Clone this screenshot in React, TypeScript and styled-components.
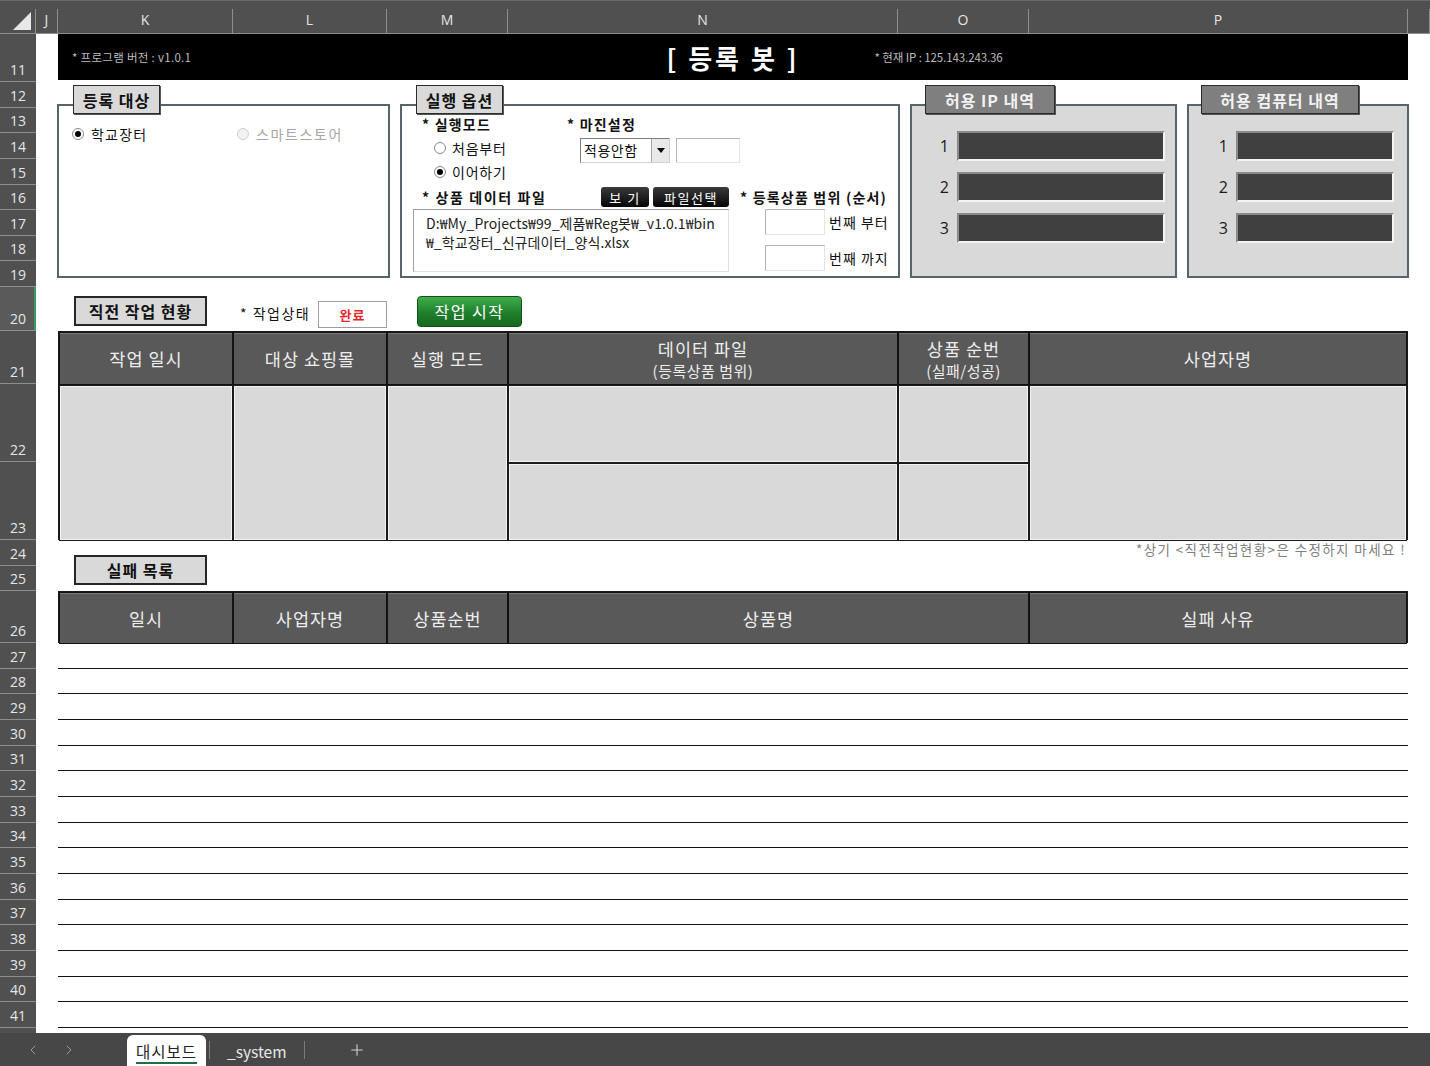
import React from 'react';
import styled, { createGlobalStyle, css } from 'styled-components';
import { ChevronLeft, ChevronRight, Plus } from 'lucide-react';

const GlobalStyle = createGlobalStyle`
  html, body {
    margin: 0;
    padding: 0;
    background: #fff;
  }
  body {
    font-family: "Noto Sans CJK KR", "Noto Sans", sans-serif;
  }
  * {
    box-sizing: border-box;
  }
`;

// sheet columns J..Q
const COLS = [
  { label: 'J', w: 22 },
  { label: 'K', w: 175 },
  { label: 'L', w: 154 },
  { label: 'M', w: 121 },
  { label: 'N', w: 390 },
  { label: 'O', w: 131 },
  { label: 'P', w: 379 },
  { label: '', w: 22 },
];

const ROWS: { n: number; h: number }[] = [
  { n: 11, h: 48 },
  ...[12, 13, 14, 15, 16, 17, 18, 19].map((n) => ({ n, h: 25.625 })),
  { n: 20, h: 44 },
  { n: 21, h: 53 },
  { n: 22, h: 78 },
  { n: 23, h: 78 },
  { n: 24, h: 26 },
  { n: 25, h: 25 },
  { n: 26, h: 52 },
  ...Array.from({ length: 15 }, (_, i) => ({ n: 27 + i, h: 385 / 15 })),
  { n: 42, h: 26 },
];

const ACTIVE_ROW = 20;
const LAST_VISIBLE_ROW = 41;

const KR = `"Noto Sans CJK KR", "Noto Sans", sans-serif`;
const UI = `"Open Sans", "Noto Sans", sans-serif`;

/* ---------- frame of the workbook ---------- */

const Window = styled.div`
  width: 1430px;
  height: 1066px;
  display: flex;
  flex-direction: column;
  overflow: hidden;
  background: #fff;
  font-family: ${KR};
`;

const ColumnHeaderBar = styled.div`
  flex: none;
  height: 34px;
  display: flex;
  padding-top: 8px;
  background: #505050;
  border-top: 1px solid #6a6a6a;
  border-bottom: 1px solid #8e8e8e;
`;

const Corner = styled.div`
  flex: none;
  width: 36px;
  border-right: 1px solid #8e8e8e;
  display: flex;
  align-items: flex-end;
  justify-content: flex-end;
  padding: 0 3px 2px 0;
`;

const ColHead = styled.div<{ $w?: number }>`
  ${({ $w }) => ($w ? `width: ${$w}px; flex: none;` : 'flex: 1;')}
  border-right: 1px solid #8e8e8e;
  padding-bottom: 3px;
  color: #e6e6e6;
  font-family: ${UI};
  font-size: 14px;
  display: flex;
  align-items: center;
  justify-content: center;
`;

const SheetBody = styled.div`
  flex: 1;
  min-height: 0;
  display: flex;
  overflow: hidden;
`;

const RowHeaderColumn = styled.div`
  flex: none;
  width: 36px;
  display: flex;
  flex-direction: column;
  background: #505050;
`;

const RowHead = styled.div<{ $h: number; $active?: boolean }>`
  flex: none;
  height: ${({ $h }) => $h}px;
  border-bottom: 1px solid #8e8e8e;
  display: flex;
  align-items: flex-end;
  justify-content: center;
  padding-bottom: 2px;
  color: #e6e6e6;
  font-family: ${UI};
  font-size: 14px;
  ${({ $active }) =>
    $active &&
    css`
      background: #5a5a5a;
      box-shadow: inset -2px 0 0 #2f9e5e;
    `}
`;

const Cells = styled.div`
  flex: none;
  display: grid;
  grid-template-columns: ${COLS.map((c) => `${c.w}px`).join(' ')};
  grid-template-rows: ${ROWS.map((r) => `${r.h}px`).join(' ')};
  background: #fff;
`;

/* ---------- banner ---------- */

const Banner = styled.div`
  grid-column: 2 / 8;
  grid-row: 1;
  margin-bottom: 2px;
  background: #000;
  display: grid;
  grid-template-columns: 1fr auto 1fr;
  align-items: center;
`;

const BannerNote = styled.span<{ $pad: number; $spacing?: number }>`
  padding-left: ${({ $pad }) => $pad}px;
  color: #bdbdbd;
  font-size: 11.5px;
  letter-spacing: ${({ $spacing = 0.3 }) => $spacing}px;
  white-space: nowrap;
`;

const BannerTitle = styled.span`
  color: #fff;
  font-size: 26px;
  font-weight: 700;
  letter-spacing: 3px;
  white-space: pre;
`;

/* ---------- group boxes ---------- */

const GroupRow = styled.div`
  grid-column: 2 / 8;
  grid-row: 2 / 10;
  margin: 0 -1px;
  padding-top: 3px;
  display: flex;
  align-items: flex-start;
  gap: 10px;
`;

const Group = styled.div<{ $w: number }>`
  flex: none;
  width: ${({ $w }) => $w}px;
  display: flex;
  flex-direction: column;
`;

const Legend = styled.div<{ $w: number; $left: number; $dark?: boolean }>`
  align-self: flex-start;
  z-index: 1;
  width: ${({ $w }) => $w}px;
  height: 29px;
  margin-left: ${({ $left }) => $left}px;
  display: flex;
  align-items: center;
  justify-content: center;
  font-size: 16px;
  font-weight: 700;
  letter-spacing: 1px;
  border: 1px solid #2b2b2b;
  box-shadow: 1px 1px 0 #555;
  background: ${({ $dark }) => ($dark ? '#7f7f7f' : '#d9d9d9')};
  color: ${({ $dark }) => ($dark ? '#f2f2f2' : '#111')};
`;

const Frame = styled.div<{ $gray?: boolean }>`
  height: 174px;
  margin-top: -10px;
  border: 2px solid #56656c;
  background: ${({ $gray }) => ($gray ? '#d9d9d9' : '#fff')};
`;

const TargetOptions = styled.div`
  display: grid;
  grid-template-columns: 165px auto;
  padding: 18px 0 0 13px;
`;

const Option = styled.div<{ $disabled?: boolean }>`
  height: 20px;
  display: flex;
  align-items: center;
  gap: 7px;
  font-size: 14px;
  letter-spacing: ${({ $disabled }) => ($disabled ? '1.6px' : '1.2px')};
  color: ${({ $disabled }) => ($disabled ? '#a6a6a6' : '#111')};
`;

const Radio = styled.span<{ $checked?: boolean; $disabled?: boolean }>`
  flex: none;
  width: 12px;
  height: 12px;
  border-radius: 50%;
  border: 1px solid ${({ $disabled }) => ($disabled ? '#cfcfcf' : '#8a8a8a')};
  background: ${({ $disabled }) => ($disabled ? '#f2f2f2' : '#fff')};
  display: flex;
  align-items: center;
  justify-content: center;
  &::after {
    content: '';
    width: 6px;
    height: 6px;
    border-radius: 50%;
    background: ${({ $checked }) => ($checked ? '#000' : 'transparent')};
  }
`;

/* ---------- run options ---------- */

const OptionsBody = styled.div`
  padding-left: 11px;
`;

const TopSection = styled.div`
  display: flex;
`;

const ModeBlock = styled.div`
  width: 154px;
  padding: 10px 0 0 9px;
`;

const MarginBlock = styled.div`
  padding-top: 10px;
`;

const FieldTitle = styled.div<{ $spacing?: number }>`
  height: 16px;
  line-height: 16px;
  font-size: 14px;
  font-weight: 700;
  letter-spacing: ${({ $spacing = 1.2 }) => $spacing}px;
  color: #111;
  white-space: nowrap;
`;

const RadioList = styled.div`
  margin-top: 4px;
  padding-left: 12px;
`;

const RadioRow = styled.div`
  height: 24px;
  display: flex;
  align-items: center;
  gap: 6px;
  font-size: 14px;
  letter-spacing: 0.8px;
  color: #111;
`;

const SelectRow = styled.div`
  margin-top: 6px;
  padding-left: 13px;
  display: flex;
  gap: 6px;
`;

const Combo = styled.div`
  width: 90px;
  height: 25px;
  display: flex;
  border: 1px solid;
  border-color: #7d7d7d #d0d0d0 #d0d0d0 #7d7d7d;
  background: #fff;
`;

const ComboText = styled.span`
  flex: 1;
  padding-left: 3px;
  font-size: 14px;
  letter-spacing: 0.5px;
  line-height: 23px;
  color: #111;
`;

const ComboButton = styled.span`
  flex: none;
  width: 18px;
  background: #e9e9e9;
  border-left: 1px solid #a8a8a8;
  display: flex;
  align-items: center;
  justify-content: center;
  &::after {
    content: '';
    border-left: 4px solid transparent;
    border-right: 4px solid transparent;
    border-top: 5px solid #000;
  }
`;

const Field = styled.div<{ $w: number; $h: number }>`
  flex: none;
  width: ${({ $w }) => $w}px;
  height: ${({ $h }) => $h}px;
  background: #fff;
  border: 1px solid;
  border-color: #b5b5b5 #e3e3e3 #e3e3e3 #b5b5b5;
`;

const BottomSection = styled.div`
  margin-top: 3px;
  display: grid;
  grid-template-columns: 316px 1fr;
  column-gap: 11px;
`;

const FileHeader = styled.div`
  height: 20px;
  padding-left: 9px;
  display: flex;
  align-items: center;
`;

const DarkButton = styled.span<{ $w: number }>`
  width: ${({ $w }) => $w}px;
  height: 20px;
  border-radius: 3px;
  background: linear-gradient(#3a3a3a, #050505);
  color: #fff;
  font-size: 13px;
  letter-spacing: 1.5px;
  display: flex;
  align-items: center;
  justify-content: center;
  white-space: pre;
`;

const ButtonPair = styled.div`
  margin-left: auto;
  display: flex;
  gap: 4px;
`;

const FileBox = styled.div`
  margin-top: 2px;
  height: 63px;
  padding: 4px 0 0 12px;
  border: 1px solid;
  border-color: #a0a0a0 #e0e0e0 #e0e0e0 #a0a0a0;
  background: #fff;
  font-size: 14px;
  line-height: 19px;
  color: #222;
  letter-spacing: 0.1px;
  white-space: nowrap;
`;

const RangeTitle = styled.div`
  height: 20px;
  display: flex;
  align-items: center;
  font-size: 14px;
  font-weight: 700;
  letter-spacing: 1.2px;
  color: #111;
  white-space: nowrap;
`;

const RangeRow = styled.div<{ $top: number }>`
  margin-top: ${({ $top }) => $top}px;
  padding-left: 25px;
  display: flex;
  align-items: center;
  gap: 4px;
  font-size: 14px;
  color: #111;
  letter-spacing: 1px;
  white-space: nowrap;
`;

/* ---------- allowed lists ---------- */

const SlotList = styled.div<{ $num: number; $right: number }>`
  padding: 25px ${({ $right }) => $right}px 0 0;
  display: grid;
  grid-template-columns: ${({ $num }) => $num}px 1fr;
  row-gap: 11px;
  align-items: center;
`;

const SlotNumber = styled.span`
  text-align: right;
  padding-right: 8px;
  font-family: ${UI};
  font-size: 16px;
  color: #1a1a1a;
`;

const SlotBar = styled.span`
  height: 30px;
  background: #404040;
  border: 2px solid;
  border-color: #8a8a8a #f4f4f4 #f4f4f4 #8a8a8a;
`;

/* ---------- status line ---------- */

const StatusLine = styled.div`
  grid-column: 2 / 8;
  grid-row: 10;
  padding: 4px 0 0 16px;
  display: flex;
  align-items: center;
`;

const SectionTag = styled.div`
  width: 133px;
  height: 30px;
  display: flex;
  align-items: center;
  justify-content: center;
  background: #d9d9d9;
  border: 2px solid #262626;
  font-size: 16px;
  font-weight: 700;
  letter-spacing: 1px;
  color: #111;
  white-space: nowrap;
`;

const StateLabel = styled.span`
  width: 78px;
  margin: 4px 0 0 33px;
  font-size: 14px;
  letter-spacing: 1.5px;
  color: #111;
  white-space: nowrap;
`;

const StateBox = styled.span`
  margin-top: 6px;
  width: 69px;
  height: 27px;
  border: 1px solid #9d9d9d;
  background: #fff;
  display: flex;
  align-items: center;
  justify-content: center;
  color: #e8262b;
  font-size: 13px;
  font-weight: 700;
  letter-spacing: 1px;
`;

const StartButton = styled.span`
  margin-left: 30px;
  width: 105px;
  height: 31px;
  border-radius: 4px;
  border: 1px solid #0f5219;
  background: linear-gradient(#3fae4b, #1f7f2d 55%, #17691f);
  display: flex;
  align-items: center;
  justify-content: center;
  color: #fff;
  font-size: 16px;
  letter-spacing: 1.5px;
`;

/* ---------- tables ---------- */

const Table = styled.div<{ $cols: string; $rows: string; $area: string }>`
  grid-column: 2 / 8;
  grid-row: ${({ $area }) => $area};
  display: grid;
  grid-template-columns: ${({ $cols }) => $cols};
  grid-template-rows: ${({ $rows }) => $rows};
  border: 1px solid #1a1a1a;
`;

const HeadCell = styled.div`
  background: #595959;
  border: 1px solid #121212;
  box-shadow: inset 0 1px 0 #7a7a7a;
  display: flex;
  flex-direction: column;
  align-items: center;
  justify-content: center;
  color: #ededed;
  font-size: 17.5px;
  letter-spacing: 1px;
  line-height: 23px;
  white-space: nowrap;
`;

const SubHead = styled.span`
  font-size: 15px;
  letter-spacing: 0.5px;
  line-height: 21px;
`;

const BodyCell = styled.div<{ $col?: string; $row?: string }>`
  grid-column: ${({ $col }) => $col || 'auto'};
  grid-row: ${({ $row }) => $row || 'auto'};
  background: #d9d9d9;
  border: 1px solid #1a1a1a;
  box-shadow: inset 0 0 0 1px #f3f3f3;
`;

const SheetNote = styled.div`
  grid-column: 2 / 8;
  grid-row: 14;
  padding-right: 2px;
  text-align: right;
  font-size: 13.5px;
  line-height: 18px;
  letter-spacing: 1.4px;
  color: #7f7f7f;
  white-space: nowrap;
`;

const FailTagSlot = styled.div`
  grid-column: 2 / 4;
  grid-row: 14 / 16;
  align-self: end;
  margin: 0 0 6px 16px;
`;

const FailLines = styled.div`
  grid-column: 2 / 8;
  grid-row: 17 / 32;
  display: flex;
  flex-direction: column;
`;

const FailLine = styled.div`
  flex: 1;
  border-bottom: 1px solid #111;
`;

/* ---------- sheet tabs ---------- */

const TabBar = styled.div`
  flex: none;
  height: 33px;
  display: flex;
  align-items: stretch;
  background: #474747;
  color: #e8e8e8;
`;

const NavArrows = styled.div`
  width: 127px;
  display: flex;
  align-items: center;
  padding-left: 25px;
  gap: 20px;
  color: #9a9a9a;
`;

const SheetTab = styled.div<{ $active?: boolean }>`
  margin-top: 2px;
  padding: 0 ${({ $active }) => ($active ? '9px' : '14px')};
  display: flex;
  align-items: center;
  font-size: 15.5px;
  white-space: nowrap;
  ${({ $active }) =>
    $active &&
    css`
      background: #fff;
      color: #222;
      border-radius: 6px 6px 0 0;
      letter-spacing: 1px;
      & > span {
        border-bottom: 2px solid #1f6e43;
        line-height: 22px;
        margin-top: 3px;
      }
    `}
`;

const TabDivider = styled.span`
  align-self: center;
  width: 1px;
  height: 18px;
  margin: 0 3px;
  background: #7a7a7a;
`;

const AddSheet = styled.div`
  display: flex;
  align-items: center;
  padding-left: 40px;
  color: #cfcfcf;
`;

const runHeads = [
  ['작업 일시'],
  ['대상 쇼핑몰'],
  ['실행 모드'],
  ['데이터 파일', '(등록상품 범위)'],
  ['상품 순번', '(실패/성공)'],
  ['사업자명'],
];

const failHeads = ['일시', '사업자명', '상품순번', '상품명', '실패 사유'];

export default function App() {
  return (
    <>
      <GlobalStyle />
      <Window>
        <ColumnHeaderBar>
          <Corner>
            <svg width="19" height="19" viewBox="0 0 19 19">
              <polygon points="18,0 18,18 0,18" fill="#e8e8e8" />
            </svg>
          </Corner>
          {COLS.map((c, i) =>
            i === COLS.length - 1 ? (
              <ColHead key={i} />
            ) : (
              <ColHead key={i} $w={c.w}>
                {c.label}
              </ColHead>
            )
          )}
        </ColumnHeaderBar>

        <SheetBody>
          <RowHeaderColumn>
            {ROWS.map((r) => (
              <RowHead key={r.n} $h={r.h} $active={r.n === ACTIVE_ROW}>
                {r.n <= LAST_VISIBLE_ROW ? r.n : ''}
              </RowHead>
            ))}
          </RowHeaderColumn>

          <Cells>
            <Banner>
              <BannerNote $pad={14}>* 프로그램 버전 : v1.0.1</BannerNote>
              <BannerTitle>[ 등록 봇 ]</BannerTitle>
              <BannerNote $pad={75} $spacing={-0.1}>
                * 현재 IP : 125.143.243.36
              </BannerNote>
            </Banner>

            <GroupRow>
              <Group $w={333}>
                <Legend $w={87} $left={16}>등록 대상</Legend>
                <Frame>
                  <TargetOptions>
                    <Option>
                      <Radio $checked />
                      학교장터
                    </Option>
                    <Option $disabled>
                      <Radio $disabled />
                      스마트스토어
                    </Option>
                  </TargetOptions>
                </Frame>
              </Group>

              <Group $w={500}>
                <Legend $w={87} $left={16}>실행 옵션</Legend>
                <Frame>
                  <OptionsBody>
                    <TopSection>
                      <ModeBlock>
                        <FieldTitle>* 실행모드</FieldTitle>
                        <RadioList>
                          <RadioRow>
                            <Radio />
                            처음부터
                          </RadioRow>
                          <RadioRow>
                            <Radio $checked />
                            이어하기
                          </RadioRow>
                        </RadioList>
                      </ModeBlock>
                      <MarginBlock>
                        <FieldTitle>* 마진설정</FieldTitle>
                        <SelectRow>
                          <Combo>
                            <ComboText>적용안함</ComboText>
                            <ComboButton />
                          </Combo>
                          <Field $w={64} $h={25} />
                        </SelectRow>
                      </MarginBlock>
                    </TopSection>

                    <BottomSection>
                      <div>
                        <FileHeader>
                          <FieldTitle $spacing={1.6}>* 상품 데이터 파일</FieldTitle>
                          <ButtonPair>
                            <DarkButton $w={48}>보 기</DarkButton>
                            <DarkButton $w={76}>파일선택</DarkButton>
                          </ButtonPair>
                        </FileHeader>
                        <FileBox>
                          D:₩My_Projects₩99_제품₩Reg봇₩_v1.0.1₩bin
                          <br />
                          ₩_학교장터_신규데이터_양식.xlsx
                        </FileBox>
                      </div>
                      <div>
                        <RangeTitle>* 등록상품 범위 (순서)</RangeTitle>
                        <RangeRow $top={2}>
                          <Field $w={60} $h={26} />
                          번째 부터
                        </RangeRow>
                        <RangeRow $top={10}>
                          <Field $w={60} $h={26} />
                          번째 까지
                        </RangeRow>
                      </div>
                    </BottomSection>
                  </OptionsBody>
                </Frame>
              </Group>

              <Group $w={267}>
                <Legend $w={130} $left={15} $dark>
                  허용 IP 내역
                </Legend>
                <Frame $gray>
                  <SlotList $num={45} $right={10}>
                    {[1, 2, 3].map((n) => (
                      <React.Fragment key={n}>
                        <SlotNumber>{n}</SlotNumber>
                        <SlotBar />
                      </React.Fragment>
                    ))}
                  </SlotList>
                </Frame>
              </Group>

              <Group $w={222}>
                <Legend $w={158} $left={14} $dark>
                  허용 컴퓨터 내역
                </Legend>
                <Frame $gray>
                  <SlotList $num={47} $right={13}>
                    {[1, 2, 3].map((n) => (
                      <React.Fragment key={n}>
                        <SlotNumber>{n}</SlotNumber>
                        <SlotBar />
                      </React.Fragment>
                    ))}
                  </SlotList>
                </Frame>
              </Group>
            </GroupRow>

            <StatusLine>
              <SectionTag>직전 작업 현황</SectionTag>
              <StateLabel>* 작업상태</StateLabel>
              <StateBox>완료</StateBox>
              <StartButton>작업 시작</StartButton>
            </StatusLine>

            <Table $cols="174px 154px 121px 390px 131px 1fr" $rows="53px 78px 78px" $area="11 / 14">
              {runHeads.map((h, i) => (
                <HeadCell key={i}>
                  {h[0]}
                  {h[1] && <SubHead>{h[1]}</SubHead>}
                </HeadCell>
              ))}
              <BodyCell $col="1" $row="2 / 4" />
              <BodyCell $col="2" $row="2 / 4" />
              <BodyCell $col="3" $row="2 / 4" />
              <BodyCell $col="4" $row="2" />
              <BodyCell $col="5" $row="2" />
              <BodyCell $col="6" $row="2 / 4" />
              <BodyCell $col="4" $row="3" />
              <BodyCell $col="5" $row="3" />
            </Table>

            <SheetNote>*상기 &lt;직전작업현황&gt;은 수정하지 마세요 !</SheetNote>

            <FailTagSlot>
              <SectionTag>실패 목록</SectionTag>
            </FailTagSlot>

            <Table $cols="174px 154px 121px 521px 1fr" $rows="52px" $area="16">
              {failHeads.map((h) => (
                <HeadCell key={h}>{h}</HeadCell>
              ))}
            </Table>

            <FailLines>
              {Array.from({ length: 15 }, (_, i) => (
                <FailLine key={i} />
              ))}
            </FailLines>
          </Cells>
        </SheetBody>

        <TabBar>
          <NavArrows>
            <ChevronLeft size={16} strokeWidth={1.5} />
            <ChevronRight size={16} strokeWidth={1.5} />
          </NavArrows>
          <SheetTab $active>
            <span>대시보드</span>
          </SheetTab>
          <TabDivider />
          <SheetTab>_system</SheetTab>
          <TabDivider />
          <AddSheet>
            <Plus size={18} strokeWidth={1.5} />
          </AddSheet>
        </TabBar>
      </Window>
    </>
  );
}
